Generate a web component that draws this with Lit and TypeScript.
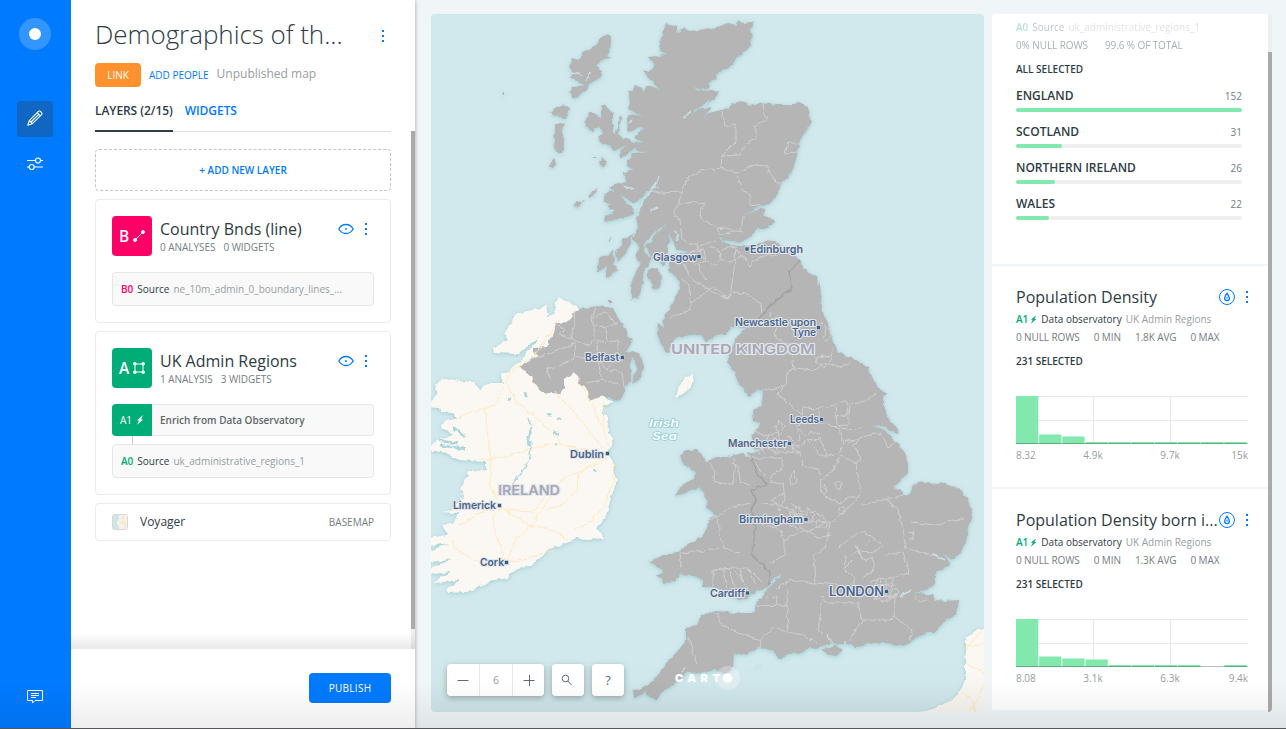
import { LitElement, html, css, svg } from "lit";
import { customElement, property } from "lit/decorators.js";

const dots = html`<svg width="4" height="14" viewBox="0 0 4 14" fill="#007aff"><rect x="1" y="1" width="2" height="2"/><rect x="1" y="6" width="2" height="2"/><rect x="1" y="11" width="2" height="2"/></svg>`;
const eye = html`<svg width="16" height="12" viewBox="0 0 16 12"><path d="M.8 6C2.400 3.200 5 1.500 8 1.500S13.600 3.200 15.200 6C13.600 8.800 11 10.500 8 10.500S2.400 8.800 .8 6Z" fill="none" stroke="#007aff" stroke-width="1.300"/><circle cx="8" cy="6" r=".9" fill="#007aff"/></svg>`;
const drop = html`<svg width="16" height="16" viewBox="0 0 16 16" fill="none" stroke="#007aff"><circle cx="8" cy="8" r="7.500"/><path d="M8 4.300C7 6 5.600 7.400 5.600 9.200A2.400 2.400 0 0 0 10.400 9.200C10.400 7.400 9 6 8 4.300Z" stroke-width="1.300"/><path d="M8 7.800v1.700" stroke-width="1.200"/></svg>`;
const bolt = (size: number) => html`<svg width=${size} height=${size + 2} viewBox="0 0 8 10"><path d="M7 0 1 5.400H3.200L.8 10 7.200 4.400H5Z" fill="currentColor"/></svg>`;

@customElement("uk-map")
class UkMap extends LitElement {
  static styles = css`
    :host { display: block; width: 553px; height: 698px; border-radius: 4px; overflow: hidden; position: relative; background: #d1e8ec; }
    svg { display: block; }
    .canvas { width: 553px; height: 698px; }
    .label { font-family: Inter, "Open Sans", sans-serif; font-weight: 600; fill: #48668e; stroke: #e6e6ea; stroke-width: 2.200px; stroke-linejoin: round; paint-order: stroke; }
    .country { fill: #a2a9b8; }
    .sea { fill: #fff; stroke: #8ccdd4; stroke-width: 1.400px; font-style: italic; font-weight: 600; }
    .brand { font-family: Inter, "Open Sans", sans-serif; font-weight: 900; fill: #fff; }
    .controls { position: absolute; left: 16px; bottom: 16px; display: flex; gap: 8px; }
    .btn { display: flex; width: 32px; height: 32px; background: #fff; border-radius: 4px; box-shadow: 0 2px 6px rgba(0,0,0,.28); align-items: center; justify-content: center; font: 13px "Open Sans", sans-serif; color: #5f6d74; }
    .zoom { display: grid; grid-template-columns: 32px 34px 31px; width: 97px; }
    .zoom > * { display: flex; height: 32px; align-items: center; justify-content: center; }
    .level { color: #979ea1; font-size: 10.500px; border-left: 1px solid #e8e8e8; border-right: 1px solid #e8e8e8; }
  `;
  private label(x: number, y: number, w: number, text: string, cls = "", size = 11) {
    return svg`<text class="label ${cls}" x=${x} y=${y} font-size=${size} textLength=${w} lengthAdjust="spacingAndGlyphs">${text}</text>`;
  }
  render() {
    const cities = [[699, 256.500], [747, 249], [818.500, 327.500], [622.500, 357.500], [607.500, 453.500], [499.500, 505.500], [821.500, 419.500], [789.500, 443.500], [806, 519.500], [506.500, 562.500], [747.500, 593], [886.500, 591.500]];
    return html`
      <svg class="canvas" viewBox="431 14 553 698">
        <defs>
          <filter id="rough" x="431" y="0" width="560" height="729" filterUnits="userSpaceOnUse" color-interpolation-filters="sRGB">
            <feTurbulence type="fractalNoise" baseFrequency=".16" numOctaves="2" seed="4" result="n"/>
            <feDisplacementMap in="SourceGraphic" in2="n" scale="5" xChannelSelector="R" yChannelSelector="G"/>
          </filter>
          <filter id="shore" x="400" y="0" width="620" height="760" filterUnits="userSpaceOnUse"><feDropShadow dx="0" dy="1" stdDeviation="2" flood-color="#8fc6cc" flood-opacity=".75"/></filter>
          <linearGradient id="fade" x1="0" y1="0" x2="0" y2="1"><stop offset="0" stop-opacity="0"/><stop offset="1" stop-opacity=".02"/></linearGradient>
        </defs>
        <g filter="url(#shore)"><g filter="url(#rough)">
          <g fill="#fbf8f3">
            <path d="M559 297L565 301 576 306 600 330 603 396 614 403 603 405 601 412 608 417 609 432 614 440 608 452 614 462 614 473 618 480 611 497 610 500 606 517 597 528 604 538 588 540 576 538 567 543 547 550 542 557 531 565 518 569 508 575 508 578 493 580 485 585 477 588 467 592 447 593 448 588 461 580 433 583 452 572 431 574 431 567 452 560 428 562 428 552 449 543 428 546 428 538 447 535 442 525 454 522 458 513 442 512 451 510 463 497 461 487 469 472 486 470 486 462 458 460 448 453 428 450 433 443 453 435 441 427 443 422 458 418 453 413 441 412 439 407 428 406 438 395 434 385 446 378 460 381 474 382 479 390 490 383 504 383 501 375 519 363 528 352 539 338 531 343 519 354 494 353 493 348 508 340 504 333 509 328 514 315 531 310 541 308 546 305 548 317 553 315 556 303Z"/>
            <path d="M691 373L694 380 686 392 676 398 679 385Z"/>
            <path d="M990 626L974 632 966 638 965 667 965 680 960 693 945 703 912 716H990Z"/>
          </g>
          <g fill="#b5b5b5">
            <path d="M665 24L671 25 676 27 678 33 684 28 689 31 700 30 717 27 728 23 737 25 738 20 743 23 754 22 750 32 753 37 750 46 745 52 738 56 732 65 718 73 715 79 708 82 710 87 700 89 693 87 698 91 708 90 720 90 713 100 707 107 711 101 702 105 692 113 703 108 711 107 701 121 708 113 722 110 728 107 737 102 745 103 750 106 763 103 775 105 788 105 800 103 807 107 809 113 811 123 807 129 803 135 799 143 798 153 792 172 781 183 779 193 768 205 758 207 743 216 760 209 764 210 764 216 772 218 774 222 768 228 758 228 752 234 748 239 737 242 723 240 717 236 723 242 735 246 750 246 762 243 765 240 773 241 780 245 790 248 800 260 807 272 817 277 820 292 823 313 828 323 833 342 837 350 847 357 857 360 868 367 873 380 880 390 888 394 883 397 883 407 888 418 897 428 899 434 890 430 882 425 870 426 862 425 880 427 887 433 898 443 905 452 908 463 908 473 902 480 893 487 900 489 903 494 909 495 913 485 923 482 940 483 957 488 968 498 972 517 968 527 966 543 960 553 952 560 943 554 950 563 945 568 938 570 935 575 934 585 927 590 912 592 933 595 935 600 945 601 958 600 956 615 942 623 935 633 926 633 913 640 904 646 886 643 868 643 856 647 847 644 835 644 826 635 832 643 820 648 810 647 801 653 788 654 781 660 774 652 760 647 749 653 738 655 734 653 733 667 727 675 717 670 702 672 686 673 677 682 668 688 661 693 656 701 652 697 645 692 635 697 633 692 649 684 661 673 665 663 677 652 686 643 686 628 697 626 701 615 717 611 735 613 754 613 756 602 765 593 772 585 783 572 774 578 768 587 760 590 751 595 747 599 735 599 724 590 713 587 702 587 702 580 697 578 681 573 674 582 665 583 656 575 663 573 661 568 649 562 663 555 677 552 692 542 701 537 708 527 710 518 717 515 706 508 707 500 704 493 700 487 690 491 676 496 679 488 694 478 696 473 684 465 679 457 686 450 698 450 706 462 717 457 728 457 743 453 752 460 748 452 757 452 764 457 753 447 752 437 760 423 754 422 753 410 762 405 763 391 757 389 750 397 745 392 743 387 737 380 735 373 727 363 732 348 738 335 743 330 752 328 730 327 727 335 717 335 707 342 700 335 688 335 674 339 668 353 661 345 657 333 658 323 663 327 664 317 671 307 678 293 681 283 676 277 669 270 669 260 674 255 689 252 676 249 670 232 668 250 663 265 651 257 646 247 656 234 668 223 655 232 646 241 644 250 651 260 644 270 642 290 639 298 631 300 631 290 633 277 641 263 635 257 639 247 633 237 638 227 636 217 641 207 648 197 660 177 641 197 634 203 621 195 609 187 626 182 624 173 634 170 626 165 633 153 646 152 634 149 622 158 619 155 628 143 644 142 634 138 644 128 638 127 629 132 626 123 628 115 641 117 629 108 628 90 634 90 636 85 644 90 648 85 661 90 653 83 646 75 644 70 649 72 654 65 648 57 666 55 659 50 659 42 663 35Z"/>
            <path d="M608 34L611 38 611 43 606 57 612 59 601 60 596 67 602 70 601 77 591 83 586 90 574 99 569 93 574 87 584 85 578 80 570 78 573 72 569 67 573 58 579 60 584 52 594 45 601 38Z"/>
            <path d="M549 112L558 107 564 105 569 108 566 118 560 118ZM555 123L564 123 562 130 564 142 563 153 556 153 554 140 555 130ZM554 158L556 163 553 167 549 166Z"/>
            <path d="M604 104L613 113 613 130 623 138 633 142 624 147 614 150 608 145 603 145 598 137 603 133 598 125 593 132 586 127 584 122 591 112 601 118 601 107Z"/>
            <path d="M603 158L607 161 605 166 601 165 599 162ZM592 157H596V158H592ZM620 115L621 119 618 134 616 132ZM598 188L594 194 588 198 589 194ZM586 200L582 204 578 208 574 206 575 203Z"/>
            <path d="M611 190L619 193 626 202 634 208 633 215 621 218 604 222 603 218 614 212 608 208 607 204 612 205 604 200 604 195Z"/>
            <path d="M633 233L631 243 623 257 618 262 616 253 623 240ZM613 250L614 262 618 270 606 278 606 267 598 272 599 258 608 255ZM612 235L610 242 608 242ZM648 270L658 268 661 277 660 290 653 288 648 277Z"/>
            <path d="M822 650L835 645 843 650 835 657ZM501 93H504V95H501ZM607 301H611V303H607Z"/>
            <path d="M576 310L596 306 614 308 619 320 626 328 628 337 633 340 629 347 624 352 634 351 640 353 644 367 641 378 633 384 635 372 638 368 632 356 630 366 632 380 624 387 624 395 618 401 603 396 589 401 588 390 579 383 578 375 573 372 564 380 564 388 559 394 544 392 533 383 531 377 520 367 531 360 539 356 533 352 533 348 546 347 553 335 556 323 568 322Z"/>
          </g>
          <path d="M660 177L648 195 640 206 637 216M660 188L652 187M659 207L650 211M675 230L678 240M623 186L634 189M626 123L633 120M690 112L683 119M572 72L582 76M590 72L585 82M604 212L614 210M933 554L945 560M900 596L912 590M686 667L682 672M826 634L831 642M845 640V645M760 665L756 668" fill="none" stroke="#c8e1e4" stroke-width="1.500"/>
        </g></g>
        <g filter="url(#rough)" fill="none" stroke-linejoin="round">
          <g stroke="#ffe8b5" stroke-width=".9">
            <path d="M607 453L580 449 553 443 530 449 505 457 480 460M555 392L570 407 590 432 605 451M603 400L604 428 609 450M578 381L594 407 603 430M506 384L518 403 540 421 563 444M504 385L495 405 470 412 458 419M485 406L487 430 491 460 490 485 499 505M607 455L585 468 567 477 550 490 532 512 505 510M608 458L580 472 577 490 562 505 547 510M613 460L614 480 605 505 592 520 575 530M499 507L492 520 500 545 506 561M499 507L520 518 531 526 515 540 508 560M531 526L555 531 568 540M531 526L545 505 555 490M506 562L530 558 555 549M506 562L480 562 458 552 452 540M460 525L480 513 499 506M506 384L508 374 535 356 548 335 560 318M685 377L692 384M966 645H984M969 665L984 672M982 632L972 640 966 650M962 693L973 700 975 712M984 685L970 712"/>
          </g>
          <g stroke="#acd6da"><path d="M529 418L531 425M531 441L530 457 524 470 514 482 510 494" stroke-width="1.200"/><path d="M531 427L528 436 529 446" stroke-width="3"/><path d="M548 414L551 416M557 420L561 418M554 432L559 434M556 445H558M507 399L510 400M525 392L526 398M593 470L597 472M453 427L465 437M440 441L458 443M439 445L465 449" stroke-width="2.600"/></g>
          <g stroke="#d0d0d0" stroke-width="1">
            <path d="M722 111L725 126 736 125 736 142 722 156 721 168 700 171 688 178 682 192 660 193 650 191M763 103L764 112 768 118 756 126 756 139 745 144 740 155 722 156M798 143L788 143 785 154 798 153M721 168L738 173 754 165 767 166 774 180 781 183M738 173L741 190 750 195 750 205 763 206M682 192L678 204 696 202 706 204 700 211 703 220 718 228 743 232M678 204L673 214 680 220 682 239 690 244 700 246 717 240M743 216L741 232M717 228L720 235 731 232"/>
            <path d="M689 244L697 244 701 256 714 266 721 259 720 252 710 245M721 259L731 262 742 255 750 266 757 258 770 254 780 257M736 246L735 260 733 278 729 300 715 293 700 284 690 278 684 262 692 250M720 250L733 247 741 255M681 278L689 285 690 310 670 318M690 303L700 297 710 288 720 290 727 300 735 292 750 295 761 305 762 314"/>
            <path d="M689 252L704 250 706 261 695 264 688 258M699 264L700 272 706 280M770 312L775 325 776 338 790 345 794 368 815 370 824 364 840 367 852 362M794 368L787 373 786 386 764 390M786 386L777 395 791 405 802 415 803 407 815 409 834 406 839 401 847 402 848 413 837 416M835 406L837 424 848 426 850 404 865 402 877 393M797 425L820 421 832 426 852 430 862 427M819 409L820 421M815 330L821 323 826 328 823 340M828 323L831 336 825 343M833 347L831 360 824 368 815 362 818 357 832 355"/>
            <path d="M753 430L765 436 778 432 780 442 797 447 808 440 820 438 827 456 820 456 808 440M778 421L785 427 780 435 775 428ZM763 444L775 440 790 446 800 440 797 425M790 447L800 452 803 465 820 470 821 488 825 497 840 503 850 497 858 497 861 488 857 480 856 463 861 460 854 445 862 437 880 433 888 447 897 441M757 451L768 447 775 453 800 452M752 458L781 458 783 467 772 475 770 482 783 484M752 459L765 475M710 463L715 473 713 481 720 484 732 485 735 473 734 458M732 462L739 468 740 481 750 485M790 475L794 470 797 483 792 485ZM783 484L785 497 780 510 772 500 785 492M821 480L834 469 841 455 856 463M861 505L880 501 903 495"/>
            <path d="M760 447L766 453M770 443L768 450M776 445L779 452M784 446L786 452M793 444V452M765 440L771 434 776 440M787 436L795 440M800 430L805 436 812 432 819 434M824 485L828 491 824 494 822 488M835 482L841 483 840 490 836 488ZM840 426L842 440 850 443M828 456L840 452 845 440 858 441"/>
            <path d="M793 510L797 506 802 512 808 508 815 514 812 521 802 524 795 519ZM800 506L803 520M808 509L806 516M815 522H827V527H817ZM838 507H844V513H839ZM908 533L914 532 913 538 909 539"/>
            <path d="M717 515L720 535 724 548 738 553M710 520L730 508 750 503M681 568L680 553 705 551 719 548M713 587L713 570 732 568 748 568 755 583M722 569L728 588M729 568L735 590M742 568L740 578 749 590M748 568L762 582M736 572L745 582M762 524L780 530 784 540 784 555 771 563M762 503L780 505 800 515 815 512 830 523 825 548 814 555 816 583 838 585 842 590M784 540L805 530 818 538 830 535M797 523L806 533 826 522 810 520ZM791 503L800 510M806 519L790 512 788 523 800 530M830 523L845 510 857 500M839 548L850 538 862 532 870 535 882 545 876 552 860 551M883 497L898 510 903 530 906 548 932 556M911 522L935 525 965 518M886 555L903 552 909 573 893 578M845 555L846 570 854 578 854 590 870 595 897 596M822 595L825 603 858 603M862 590L858 605 862 620 888 620 895 617 912 630 910 640M862 620L850 640M788 590L787 605 788 633 775 627 760 640 735 631 722 625 717 613M777 588L790 580 816 583M822 603L818 630 823 634M788 633L802 635 817 643M760 640L761 647M687 638L691 645 697 665M756 606L787 605M765 597L778 596 777 606M895 597V618M870 583L880 577 892 579 898 592 888 603 875 598 876 590 892 590M880 577L882 603M870 590H898M872 586L897 585M876 580L874 600M886 578L887 603M892 582L891 600M872 595H897M851 556L858 551 864 560 872 558 875 566 870 573 862 578M855 545L862 560M866 545L871 540M844 568L851 561M870 573L874 569M914 596L919 602 928 600"/>
            <path d="M556 323L565 330 560 335 577 341 589 345 596 340 592 318 596 307M574 311L575 323 571 338M576 342L574 358 565 363 547 369 550 378M531 359L550 353 575 343M592 318L606 312 617 325M596 342L618 341 618 350M597 343L598 360 575 357M598 360L607 370 622 372 624 387M598 360L602 380 585 383M606 370L613 361 625 360M602 380L620 385M592 325L606 328 619 322M606 328L607 341"/>
          </g>
          <g fill="none" stroke="#a3a3a3" stroke-width="1.700"><path d="M800 260L789 273 792 287 781 297 770 305 762 315 751 328M752 459L758 475 768 484 752 490 756 500 751 510 755 525 753 545 751 555 763 565 770 575 769 585"/></g>
        </g>
        <g>
          ${this.label(653, 260.500, 44, "Glasgow")}${this.label(750, 253, 53, "Edinburgh")}
          <text class="label" font-size="10"><tspan x="735" y="325.500" textLength="81" lengthAdjust="spacingAndGlyphs">Newcastle upon</tspan><tspan x="792" y="336" textLength="24" lengthAdjust="spacingAndGlyphs">Tyne</tspan></text>
          ${this.label(671, 354, 144, "UNITED KINGDOM", "country", 13.500)}
          ${this.label(585, 360.500, 34, "Belfast")}${this.label(570, 457.500, 34, "Dublin")}${this.label(498, 494.500, 62, "IRELAND", "country", 13.500)}
          ${this.label(453, 509, 43, "Limerick")}${this.label(790, 423, 29, "Leeds")}${this.label(728, 447, 59, "Manchester")}
          ${this.label(739, 523, 64, "Birmingham")}${this.label(480, 566, 24, "Cork")}${this.label(710, 597, 35, "Cardiff")}
          ${this.label(829, 596, 55, "LONDON", "", 12.500)}
          ${this.label(649, 427, 30, "Irish", "sea")}${this.label(652, 440, 25, "Sea", "sea")}
          ${cities.map(([x, y]) => svg`<rect x=${x - 2} y=${y - 2} width="4" height="4" fill="#3c5d88" stroke="#dfe3ea" stroke-width=".6"/>`)}
        </g>
        <circle cx="728" cy="678" r="12" fill="#fff" fill-opacity=".3"/><circle cx="727.500" cy="678" r="4.800" fill="#fff"/>
        <text class="brand" x="675" y="682" font-size="11" textLength="45">CART</text>
        <rect x="431" y="660" width="553" height="52" fill="url(#fade)"/>
      </svg>
      <div class="controls">
        <div class="btn zoom">
          <span><svg width="12" height="12"><path d="M0.500 6.500H11.500" stroke="#5c6b73"/></svg></span>
          <span class="level">6</span>
          <span><svg width="12" height="12"><path d="M.5 6.500H11.500M6.500 1V12" stroke="#5c6b73"/></svg></span>
        </div>
        <div class="btn"><svg width="14" height="12" viewBox="1 0 14 12" fill="none" stroke="#5c6b73"><circle cx="5.500" cy="4.500" r="3.300"/><path d="M7.800 7L11.500 11"/></svg></div>
        <div class="btn">?</div>
      </div>`;
  }
}

@customElement("histogram-widget")
class HistogramWidget extends LitElement {
  @property() heading = "";
  @property() avg = "";
  @property({ type: Array }) bars: number[] = [];
  @property({ type: Array }) ticks: string[] = [];
  static styles = css`
    :host { display: block; height: 221px; box-sizing: border-box; padding: 19px 20px 0 24px; background: #fff; }
    svg { display: block; }
    .head { display: flex; height: 24px; align-items: center; }
    .title { flex: 1; font-size: 16px; color: #2e3c43; white-space: nowrap; }
    .icon { margin-right: 10px; } .menu { margin-right: -1px; }
    .src { display: flex; height: 18px; margin-top: 1px; align-items: center; font-size: 10px; white-space: nowrap; }
    .id { color: #00ad77; font-weight: 600; } .bolt { color: #00ad77; margin: 0 4px 0 2px; }
    .kind { color: #2e3c43; margin-right: 4px; } .name { color: #979ea1; }
    .stats { display: flex; height: 18px; gap: 14px; align-items: center; font-size: 10px; color: #747e82; letter-spacing: -.1px; }
    .selected { margin-top: 6px; height: 18px; line-height: 18px; font-size: 10px; font-weight: 600; color: #2e3c43; }
    .chart { margin-top: 26px; }
    .axis { display: grid; grid-template-columns: 48px 58px 96px 1fr; height: 16px; margin-top: 3px; line-height: 16px; font-size: 10px; color: #979ea1; }
    .tick { text-align: center; } .tick:first-child { text-align: left; } .tick:last-child { text-align: right; }
  `;
  render() {
    return html`
      <div class="head"><span class="title">${this.heading}</span><span class="icon">${drop}</span><span class="menu">${dots}</span></div>
      <div class="src"><span class="id">A1</span><span class="bolt">${bolt(7)}</span><span class="kind">Data observatory</span><span class="name">UK Admin Regions</span></div>
      <div class="stats"><span>0 NULL ROWS</span><span>0 MIN</span><span>${this.avg} AVG</span><span>0 MAX</span></div>
      <div class="selected">231 SELECTED</div>
      <svg class="chart" width="232" height="48" viewBox="0 0 232 48">
        <path d="M0 .5H232M0 24.500H232M77.500 0V48M154.500 0V48" stroke="#e8e8e8"/><path d="M0 47.500H232" stroke="#bbb"/>
        ${this.bars.map((h, i) => svg`<rect x=${i * 23.150} y=${48 - h} width="22.300" height=${h} fill="#82e8ae"/>${h ? svg`<rect x=${i * 23.150} y="47" width="22.300" height="1" fill="#5cad80"/>` : ""}`)}
      </svg>
      <div class="axis">${this.ticks.map((t) => html`<span class="tick">${t}</span>`)}</div>`;
  }
}

@customElement("app-root")
class AppRoot extends LitElement {
  static styles = css`
    * { box-sizing: border-box; }
    svg { display: block; }
    :host { display: flex; position: relative; width: 1286px; height: 729px; overflow: hidden; background: #f0f5f8; font-family: "Open Sans", sans-serif; color: #2e3c43; }
    .rail { width: 71px; height: 729px; background: #007aff; display: flex; flex-direction: column; align-items: center; padding-top: 18px; z-index: 2; }
    .logo { width: 32px; height: 32px; border-radius: 50%; background: #3395ff; display: grid; place-items: center; margin-right: 1px; }
    .logo::after { content: ""; width: 12px; height: 12px; border-radius: 50%; background: #fff; }
    .tool { display: grid; place-items: center; width: 36px; height: 36px; border-radius: 4px; margin-right: 1px; }
    .active { background: #0f66c3; margin-top: 51px; padding-bottom: 2px; }
    .options { margin-top: 9px; } .chat { margin-top: auto; margin-bottom: 14px; }
    .panel { width: 344px; height: 729px; background: #fff; display: flex; flex-direction: column; box-shadow: 0 0 4px rgba(0,0,0,.35); z-index: 1; }
    .body { position: relative; height: 649px; padding: 0 24px; }
    .top { display: flex; height: 63px; padding-top: 15px; justify-content: space-between; }
    .title { font-size: 26px; line-height: 38px; font-weight: 300; white-space: nowrap; letter-spacing: -.05px; }
    .top .menu { margin: 14px 6px 0 0; }
    .meta { display: flex; height: 24px; align-items: center; font-size: 10px; }
    .link { width: 46px; height: 24px; border-radius: 4px; background: #ff912e; color: #fff; text-align: center; line-height: 25px; margin-right: 8px; }
    .people { color: #007aff; margin-right: 8px; } .status { color: #979ea1; font-size: 12px; line-height: 24px; padding-bottom: 1px; margin-top: -1px; }
    .tabs { display: flex; margin-top: 12px; height: 33px; border-bottom: 1px solid #ddd; gap: 12px; font-size: 12px; line-height: 23px; font-weight: 600; letter-spacing: -.06px; }
    .tab { white-space: nowrap; height: 33px; } .on { border-bottom: 2px solid #2e3c43; } .off { color: #007aff; }
    .add { margin-top: 17px; height: 42px; border: 1px dashed #c5c5c5; border-radius: 4px; font-size: 10px; font-weight: 600; color: #007aff; text-align: center; line-height: 41px; }
    .card { margin-top: 8px; border: 1px solid #ebebeb; border-radius: 4px; padding: 16px; }
    .hd { display: flex; height: 40px; margin-bottom: 16px; }
    .badge { width: 40px; height: 40px; border-radius: 4px; margin-right: 8px; color: #fff; display: flex; align-items: center; justify-content: center; gap: 4px; font-size: 15.500px; font-weight: 600; line-height: 40px; }
    .pink { background: #ff0066; } .green { background: #00ad77; }
    .txt { flex: 1; } .name { font-size: 16px; line-height: 24px; height: 24px; white-space: nowrap; margin-top: 1px; }
    .sub { display: flex; gap: 8px; font-size: 10px; line-height: 13px; color: #747e82; letter-spacing: -.04px; }
    .eye { margin: 7px 10px 0 0; } .card .menu { margin: 6px 6px 0 0; }
    .node { height: 34px; border: 1px solid #e6e6e6; border-radius: 4px; background: #f9f9f9; padding-left: 8px; display: flex; align-items: center; font-size: 10px; white-space: nowrap; }
    .key { font-weight: 600; margin-right: 4px; } .kind { margin-right: 4px; } .table { color: #979ea1; }
    .b0 { color: #ff0066; } .a0 { color: #00ad77; }
    .analysis { height: 32px; padding: 0; border-left: 0; color: #5c676d; font-weight: 600; }
    .tag { width: 40px; height: 32px; margin-right: 8px; border-radius: 4px 0 0 4px; background: #00ad77; color: #fff; display: flex; align-items: center; justify-content: center; gap: 4px; font-weight: 400; }
    .joint { width: 1px; height: 8px; background: #ccc; margin-left: 20px; }
    .base { display: flex; height: 38px; padding: 0 16px; align-items: center; font-size: 12px; }
    .swatch { width: 16px; height: 16px; margin-right: 12px; } .voyager { padding-bottom: 1px; } .kindtag { margin-left: auto; font-size: 10px; color: #747e82; }
    .scroll { position: absolute; right: 0; top: 131px; width: 4px; height: 518px; background: #eee; }
    .thumb { height: 498px; background: #aaa; }
    .fade { position: absolute; left: 0; right: 0; bottom: 0; height: 16px; background: linear-gradient(rgba(0,0,0,0), rgba(0,0,0,.09)); }
    .foot { height: 80px; padding: 24px 24px 0; display: flex; justify-content: flex-end; }
    .publish { width: 82px; height: 30px; border-radius: 4px; background: #007aff; color: #fff; font-size: 10px; line-height: 30px; text-align: center; letter-spacing: .3px; }
    uk-map { margin: 14px 8px 0 16px; flex: none; }
    .widgets { display: flex; width: 280px; height: 698px; margin-top: 14px; border-radius: 4px; overflow: hidden; }
    .list { width: 276px; display: flex; flex-direction: column; gap: 2px; }
    .category { height: 250px; background: #fff; padding: 4px 26px 0 24px; }
    .line { height: 18px; display: flex; align-items: center; font-size: 10px; white-space: nowrap; }
    .faint { opacity: .3; } .half { opacity: .62; color: #747e82; gap: 17px; letter-spacing: -.1px; }
    .all { margin: 6px 0 9px; font-weight: 600; }
    .row { display: flex; height: 21px; justify-content: space-between; font-size: 12px; line-height: 18px; font-weight: 600; }
    .count { font-size: 10px; font-weight: 400; color: #747e82; line-height: 19px; }
    .bar { height: 4px; margin-bottom: 11px; border-radius: 2px; background: #eee; }
    .fill { height: 4px; border-radius: 2px; background: #82e8ae; }
    .wscroll { width: 4px; background: #eee; padding-top: 38px; } .wthumb { height: 660px; background: #aaa; }
    .shade { position: absolute; z-index: 3; left: 0; right: 0; bottom: 0; height: 48px; background: linear-gradient(rgba(0,0,0,0), rgba(0,0,0,.065)); border-bottom: 1px solid #55585a; pointer-events: none; }
  `;
  render() {
    const rows: [string, number][] = [["ENGLAND", 152], ["SCOTLAND", 31], ["NORTHERN IRELAND", 26], ["WALES", 22]];
    return html`
      <nav class="rail">
        <div class="logo"></div>
        <div class="tool active"><svg width="16" height="16" viewBox="0 0 16 16" fill="none" stroke="#fff" stroke-width="1.100" stroke-linejoin="round"><path d="M.8 15.200 2.300 10.700 11.400 1.400A1.400 1.400 0 0 1 13.400 1.400L14.600 2.600A1.400 1.400 0 0 1 14.600 4.600L5.300 13.700ZM2.300 10.700 5.300 13.700M10.200 2.700 13.300 5.800M4 12 11.700 4.300"/></svg></div>
        <div class="tool options"><svg width="16" height="14" viewBox="0 0 16 14" fill="none" stroke="#fff" stroke-width="1.200"><path d="M0 3.500H8.500M13.500 3.500H16M0 10H2.200M7.200 10H16"/><circle cx="11" cy="3.500" r="2.500"/><circle cx="4.700" cy="10" r="2.500"/></svg></div>
        <div class="tool chat"><svg width="16" height="14" viewBox="0 0 16 14" fill="none" stroke="#fff"><path d="M.5 .5H15.500V10.500H8L5.500 13V10.500H.5ZM4 3.500H12M4 5.500H12M4 7.500H9"/></svg></div>
      </nav>
      <aside class="panel">
        <div class="body">
          <div class="top"><span class="title">Demographics of th...</span><span class="menu">${dots}</span></div>
          <div class="meta"><span class="link">LINK</span><span class="people">ADD PEOPLE</span><span class="status">Unpublished map</span></div>
          <div class="tabs"><span class="tab on">LAYERS (2/15)</span><span class="tab off">WIDGETS</span></div>
          <div class="add">+ ADD NEW LAYER</div>
          <section class="card">
            <div class="hd"><span class="badge pink">B<svg width="12" height="12" viewBox="0 0 12 12" fill="#fff" stroke="#fff"><path d="M2 10 10 2"/><circle cx="2" cy="10" r="1.500"/><circle cx="10" cy="2" r="1.500"/></svg></span>
              <div class="txt"><div class="name">Country Bnds (line)</div><div class="sub"><span>0 ANALYSES</span><span>0 WIDGETS</span></div></div>
              <span class="eye">${eye}</span><span class="menu">${dots}</span></div>
            <div class="node"><span class="key b0">B0</span><span class="kind">Source</span><span class="table">ne_10m_admin_0_boundary_lines_...</span></div>
          </section>
          <section class="card">
            <div class="hd"><span class="badge green">A<svg width="12" height="12" viewBox="0 0 12 12" fill="none" stroke="#fff"><path d="M2 2H10V10H2Z"/><path fill="#fff" stroke="none" d="M0 1.800a1.800 1.800 0 1 1 3.600 0a1.800 1.800 0 1 1-3.600 0M8.400 1.800a1.800 1.800 0 1 1 3.600 0a1.800 1.800 0 1 1-3.600 0M0 10.200a1.800 1.800 0 1 1 3.600 0a1.800 1.800 0 1 1-3.600 0M8.400 10.200a1.800 1.800 0 1 1 3.600 0a1.800 1.800 0 1 1-3.600 0"/></svg></span>
              <div class="txt"><div class="name">UK Admin Regions</div><div class="sub"><span>1 ANALYSIS</span><span>3 WIDGETS</span></div></div>
              <span class="eye">${eye}</span><span class="menu">${dots}</span></div>
            <div class="node analysis"><span class="tag">A1 ${bolt(8)}</span>Enrich from Data Observatory</div>
            <div class="joint"></div>
            <div class="node"><span class="key a0">A0</span><span class="kind">Source</span><span class="table">uk_administrative_regions_1</span></div>
          </section>
          <section class="card base">
            <svg class="swatch" viewBox="0 0 16 16"><rect x=".5" y=".5" width="15" height="15" rx="2" fill="#cde4ea" stroke="#d8d8d3"/><path d="M7 1H15V15H7V12L5 10V7L7 6Z" fill="#f8f1e4"/><path d="M11 1V6L13 9V15M8 9H12" stroke="#f0e4d0" fill="none"/></svg>
            <span class="voyager">Voyager</span><span class="kindtag">BASEMAP</span>
          </section>
          <div class="scroll"><div class="thumb"></div></div>
          <div class="fade"></div>
        </div>
        <div class="foot"><div class="publish">PUBLISH</div></div>
      </aside>
      <uk-map></uk-map>
      <aside class="widgets">
        <div class="list">
          <section class="category">
            <div class="line faint"><span class="key a0">A0</span><span class="kind">Source</span><span class="table">uk_administrative_regions_1</span></div>
            <div class="line half"><span>0% NULL ROWS</span><span>99.6 % OF TOTAL</span></div>
            <div class="line all">ALL SELECTED</div>
            ${rows.map(([n, v]) => html`<div class="row"><span>${n}</span><span class="count">${v}</span></div><div class="bar"><div class="fill" style="width:${(v / 152) * 100}%"></div></div>`)}
          </section>
          <histogram-widget heading="Population Density" avg="1.8K" .bars=${[48, 9.500, 7.500, 2, 2, 2, 2, 2, 2, 2]} .ticks=${["8.32", "4.9k", "9.7k", "15k"]}></histogram-widget>
          <histogram-widget heading="Population Density born i..." avg="1.3K" .bars=${[48, 10.500, 8.500, 7.500, 2, 2, 2, 2, 0, 2]} .ticks=${["8.08", "3.1k", "6.3k", "9.4k"]}></histogram-widget>
        </div>
        <div class="wscroll"><div class="wthumb"></div></div>
      </aside>
      <div class="shade"></div>`;
  }
}
